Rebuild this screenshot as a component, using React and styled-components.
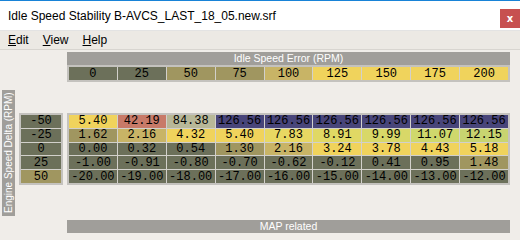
import React from "react";
import styled, { createGlobalStyle } from "styled-components";

const GlobalStyle = createGlobalStyle`
  html, body { margin: 0; padding: 0; background: #f0ede9; }
  * { box-sizing: border-box; }
`;

const DARK = "#6c705a";
const KHAKI = "#a09660";
const TAN = "#c8b466";
const YELLOW = "#f0d35c";
const NAVY = "#48457a";

const Window = styled.div`
  width: 520px;
  height: 240px;
  border-top: 1px solid #1883d7;
  background: #f0ede9;
  font-family: "Liberation Sans", Arial, sans-serif;
  overflow: hidden;
  display: flex;
  flex-direction: column;
`;

const TitleBar = styled.div`
  height: 30px;
  background: #ffffff;
  border-bottom: 1px solid #e3e3e3;
  display: flex;
  align-items: center;
  justify-content: space-between;
  padding-left: 8px;
  font-size: 12px;
  color: #000;
`;

const CloseButton = styled.div`
  width: 20px;
  height: 19px;
  margin-top: 5px;
  background: #c75050;
  color: #fff;
  font-family: "DejaVu Sans", sans-serif;
  font-weight: bold;
  font-size: 10px;
  display: flex;
  align-items: center;
  justify-content: center;
`;

const MenuBar = styled.div`
  height: 19px;
  background: #ece9e4;
  border-bottom: 1px solid #d8d5d0;
  display: flex;
  align-items: center;
  gap: 14px;
  padding-left: 8px;
  font-size: 12px;
`;

const MenuItem = styled.span`
  color: #000;
  & u { text-decoration: underline; }
`;

const Body = styled.div`
  display: grid;
  grid-template-columns: 13px 44px 443px;
  grid-template-rows: 13px 17px 31px 72px 35px 13px;
  column-gap: 4px;
  padding: 2px 0 0 2px;
`;

const Banner = styled.div`
  grid-column: 3;
  grid-row: ${(p) => p.$row};
  background: #a09e9a;
  color: #fff;
  font-size: 10.5px;
  line-height: 13px;
  text-align: center;
`;

const SideLabel = styled.div`
  grid-column: 1;
  grid-row: 2 / 7;
  align-self: end;
  height: 126px;
  margin-bottom: 17px;
  background: #a09e9a;
  color: #fff;
  font-size: 10px;
  line-height: 13px;
  writing-mode: vertical-rl;
  transform: rotate(180deg);
  text-align: center;
  white-space: nowrap;
  overflow: hidden;
`;

const Frame = styled.div`
  grid-column: ${(p) => p.$col};
  grid-row: ${(p) => p.$row};
  border: 2px solid #c4c2be;
  background: #d2d0cb;
  display: grid;
  grid-template-columns: repeat(${(p) => p.$cols}, 1fr);
  grid-auto-rows: 1fr;
  gap: 1px;
`;

const Cell = styled.div`
  background: ${(p) => p.$bg};
  color: #000;
  font-family: "Liberation Mono", "DejaVu Sans Mono", monospace;
  font-size: 12px;
  line-height: 12px;
  display: flex;
  align-items: center;
  justify-content: center;
  overflow: hidden;
`;

const columns = [
  ["0", DARK], ["25", DARK], ["50", KHAKI], ["75", KHAKI], ["100", TAN],
  ["125", YELLOW], ["150", YELLOW], ["175", YELLOW], ["200", YELLOW],
];

const rowHeads = [
  ["-50", DARK], ["-25", DARK], ["0", DARK], ["25", DARK], ["50", KHAKI],
];

const data = [
  [["5.40", YELLOW], ["42.19", "#c87a68"], ["84.38", "#b8b898"], ["126.56", NAVY], ["126.56", NAVY], ["126.56", NAVY], ["126.56", NAVY], ["126.56", NAVY], ["126.56", NAVY]],
  [["1.62", KHAKI], ["2.16", TAN], ["4.32", YELLOW], ["5.40", YELLOW], ["7.83", "#e8d862"], ["8.91", "#e0d864"], ["9.99", "#d8d868"], ["11.07", "#cfd86c"], ["12.15", "#c8d470"]],
  [["0.00", DARK], ["0.32", DARK], ["0.54", DARK], ["1.30", KHAKI], ["2.16", TAN], ["3.24", YELLOW], ["3.78", YELLOW], ["4.43", YELLOW], ["5.18", YELLOW]],
  [["-1.00", DARK], ["-0.91", DARK], ["-0.80", DARK], ["-0.70", DARK], ["-0.62", DARK], ["-0.12", DARK], ["0.41", DARK], ["0.95", DARK], ["1.48", KHAKI]],
  [["-20.00", DARK], ["-19.00", DARK], ["-18.00", DARK], ["-17.00", DARK], ["-16.00", DARK], ["-15.00", DARK], ["-14.00", DARK], ["-13.00", DARK], ["-12.00", DARK]],
];

export default function App() {
  return (
    <Window>
      <GlobalStyle />
      <TitleBar>
        <span>Idle Speed Stability B-AVCS_LAST_18_05.new.srf</span>
        <CloseButton>x</CloseButton>
      </TitleBar>
      <MenuBar>
        <MenuItem><u>E</u>dit</MenuItem>
        <MenuItem><u>V</u>iew</MenuItem>
        <MenuItem><u>H</u>elp</MenuItem>
      </MenuBar>
      <Body>
        <Banner $row={1}>Idle Speed Error (RPM)</Banner>
        <Frame $col={3} $row={2} $cols={9}>
          {columns.map(([v, c]) => (
            <Cell key={v} $bg={c}>{v}</Cell>
          ))}
        </Frame>
        <SideLabel>Engine Speed Delta (RPM)</SideLabel>
        <Frame $col={2} $row={4} $cols={1}>
          {rowHeads.map(([v, c]) => (
            <Cell key={v} $bg={c}>{v}</Cell>
          ))}
        </Frame>
        <Frame $col={3} $row={4} $cols={9}>
          {data.map((row, r) =>
            row.map(([v, c], i) => (
              <Cell key={r + "-" + i} $bg={c}>{v}</Cell>
            ))
          )}
        </Frame>
        <Banner $row={6}>MAP related</Banner>
      </Body>
    </Window>
  );
}
